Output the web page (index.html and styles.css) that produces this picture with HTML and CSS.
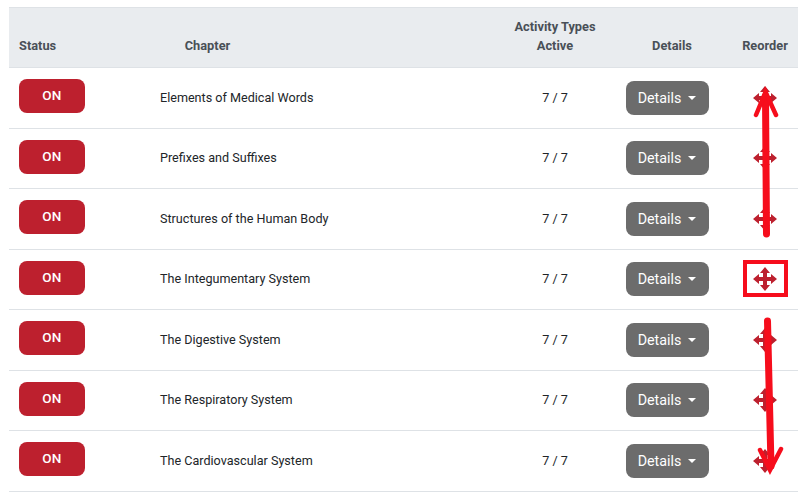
FILE: index.html
```html
<!DOCTYPE html>
<html lang="en">
<head>
  <meta charset="UTF-8" />
  <title>Chapters</title>
  <link rel="stylesheet" href="styles.css">
</head>
<body>
  <svg width="0" height="0" class="defs">
    <symbol id="move" viewBox="0 0 24 24">
      <path d="M12 0 L17 6 L14 6 L14 10 L18 10 L18 7 L24 12 L18 17 L18 14 L14 14 L14 18 L17 18 L12 24 L7 18 L10 18 L10 14 L6 14 L6 17 L0 12 L6 7 L6 10 L10 10 L10 6 L7 6 Z"/>
    </symbol>
  </svg>
  <table class="chapters">
    <colgroup>
      <col class="col-status"><col class="col-chapter"><col class="col-active"><col class="col-details"><col class="col-reorder">
    </colgroup>
    <thead>
      <tr>
        <th class="th-status">Status</th>
        <th class="th-chapter">Chapter</th>
        <th>Activity Types<br>Active</th>
        <th>Details</th>
        <th>Reorder</th>
      </tr>
    </thead>
    <tbody>
      <tr>
        <td><button class="btn-on">ON</button></td>
        <td>Elements of Medical Words</td>
        <td class="center">7 / 7</td>
        <td class="center"><button class="btn-details">Details<span class="caret"></span></button></td>
        <td class="center"><svg class="move"><use href="#move"/></svg></td>
      </tr>
      <tr>
        <td><button class="btn-on">ON</button></td>
        <td>Prefixes and Suffixes</td>
        <td class="center">7 / 7</td>
        <td class="center"><button class="btn-details">Details<span class="caret"></span></button></td>
        <td class="center"><svg class="move"><use href="#move"/></svg></td>
      </tr>
      <tr>
        <td><button class="btn-on">ON</button></td>
        <td>Structures of the Human Body</td>
        <td class="center">7 / 7</td>
        <td class="center"><button class="btn-details">Details<span class="caret"></span></button></td>
        <td class="center"><svg class="move"><use href="#move"/></svg></td>
      </tr>
      <tr>
        <td><button class="btn-on">ON</button></td>
        <td>The Integumentary System</td>
        <td class="center">7 / 7</td>
        <td class="center"><button class="btn-details">Details<span class="caret"></span></button></td>
        <td class="center"><svg class="move"><use href="#move"/></svg></td>
      </tr>
      <tr>
        <td><button class="btn-on">ON</button></td>
        <td>The Digestive System</td>
        <td class="center">7 / 7</td>
        <td class="center"><button class="btn-details">Details<span class="caret"></span></button></td>
        <td class="center"><svg class="move"><use href="#move"/></svg></td>
      </tr>
      <tr>
        <td><button class="btn-on">ON</button></td>
        <td>The Respiratory System</td>
        <td class="center">7 / 7</td>
        <td class="center"><button class="btn-details">Details<span class="caret"></span></button></td>
        <td class="center"><svg class="move"><use href="#move"/></svg></td>
      </tr>
      <tr>
        <td><button class="btn-on">ON</button></td>
        <td>The Cardiovascular System</td>
        <td class="center">7 / 7</td>
        <td class="center"><button class="btn-details">Details<span class="caret"></span></button></td>
        <td class="center"><svg class="move"><use href="#move"/></svg></td>
      </tr>
    </tbody>
  </table>

  <!-- red markup drawn over the screenshot -->
  <svg class="markup" width="809" height="492" viewBox="0 0 809 492">
    <rect x="745" y="262" width="41" height="33" fill="none" stroke="#f60d1c" stroke-width="4"/>
    <g fill="none" stroke="#f60d1c" stroke-linecap="round" stroke-linejoin="miter">
      <path d="M766.5 234 L765.5 96" stroke-width="7"/>
      <path d="M756 115 L765.5 92 L776 115" stroke-width="4.5"/>
      <path d="M767.5 321 L771 466" stroke-width="7"/>
      <path d="M760 450 L770 470 L781 449" stroke-width="4.5"/>
    </g>
  </svg>
</body>
</html>
```

FILE: styles.css
```css
body {
  margin: 0;
  padding: 7px 11px 0 9px;
  font-family: Roboto, "Liberation Sans", sans-serif;
  font-size: 13px;
  color: #212529;
  background-color: white;
  overflow: hidden;
}
.defs {
  display: block;
  height: 0;
}
.chapters {
  width: 789px;
  table-layout: fixed;
  border-collapse: collapse;
}
.col-status { width: 141px; }
.col-chapter { width: 348px; }
.col-active { width: 114px; }
.col-details { width: 120px; }
.col-reorder { width: 66px; }

.chapters th {
  box-sizing: border-box;
  height: 60px;
  padding: 0 0 12px;
  vertical-align: bottom;
  background-color: #e9ecef;
  border-top: 1px solid #dee2e6;
  border-bottom: 1px solid #dee2e6;
  color: #495057;
  font-size: 12.8px;
  font-weight: 700;
  line-height: 18.5px;
  text-align: center;
}
.chapters th.th-status {
  padding-left: 10px;
  text-align: left;
}
.chapters th.th-chapter {
  padding-right: 233px;
}
.chapters td {
  box-sizing: border-box;
  height: 60.5px;
  padding: 0 0 1.5px 10px;
  border-bottom: 1px solid #dee2e6;
  font-size: 12.6px;
  vertical-align: middle;
}
.chapters td.center {
  padding: 0 0 1.5px;
  text-align: center;
}
.btn-on {
  display: block;
  width: 66px;
  height: 34px;
  margin-top: -1.9px;
  padding: 0 0 2px;
  border: none;
  border-radius: 8px;
  background-color: #bd202e;
  color: white;
  font-family: inherit;
  font-size: 13.5px;
  font-weight: 500;
  letter-spacing: 0.3px;
}
.btn-details {
  display: inline-block;
  width: 83px;
  height: 34px;
  margin: 1.5px 10px 0 0;
  padding: 0;
  border: none;
  border-radius: 8px;
  background-color: #6c6c6c;
  color: white;
  font-family: inherit;
  font-size: 14.3px;
  vertical-align: middle;
}
.caret {
  display: inline-block;
  margin-left: 7px;
  vertical-align: 3px;
  border-top: 4px solid white;
  border-left: 4px solid transparent;
  border-right: 4px solid transparent;
}
.move {
  display: inline-block;
  width: 24px;
  height: 24px;
  margin-top: 1.5px;
  fill: #bd202e;
  vertical-align: middle;
}
.markup {
  position: absolute;
  left: 0;
  top: 0;
}
```
